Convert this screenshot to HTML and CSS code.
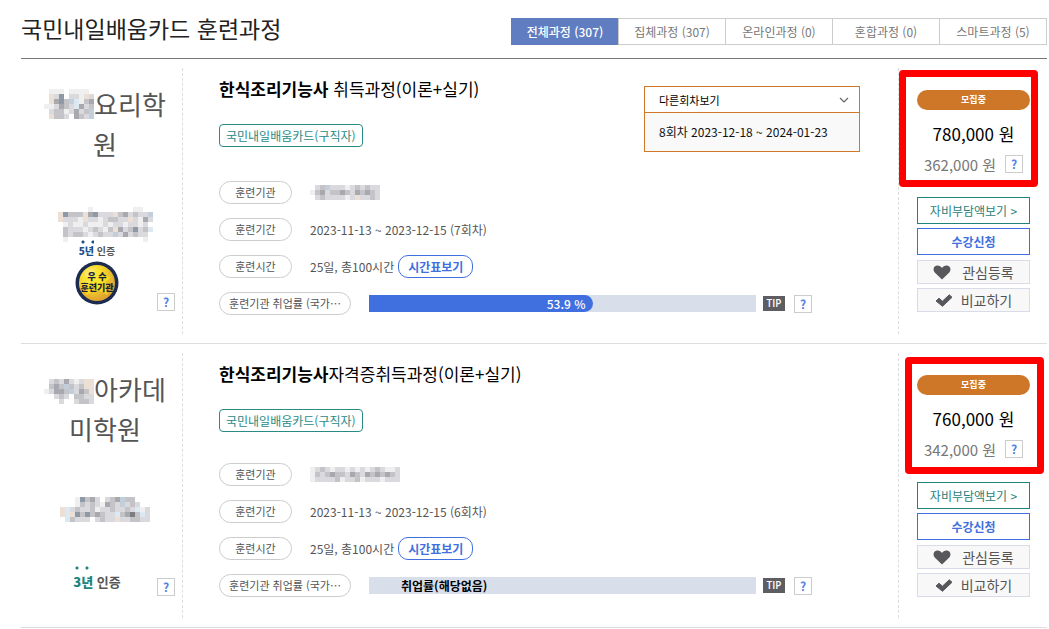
FILE: index.html
```html
<!DOCTYPE html>
<html lang="ko">
<head>
<meta charset="UTF-8">
<meta name="viewport" content="width=device-width, initial-scale=1.0">
<title>국민내일배움카드 훈련과정</title>
<link rel="stylesheet" href="styles.css">
</head>
<body>
<main class="page">
  <header class="page-header">
    <h1>국민내일배움카드 훈련과정</h1>
    <nav class="tabs">
      <a href="#" class="tab active">전체과정 (307)</a>
      <a href="#" class="tab">집체과정 (307)</a>
      <a href="#" class="tab">온라인과정 (0)</a>
      <a href="#" class="tab">혼합과정 (0)</a>
      <a href="#" class="tab">스마트과정 (5)</a>
    </nav>
  </header>

  <article class="course">
    <div class="school">
      <h2 class="school-name"><svg class="mosaic" data-rows=".aaa.aaaa.|.pbe.bbapb|.pdecslacd|aabdcbldbc|.bccabdbcs|.pccb.dcbs"></svg>요리학원</h2>
      <div class="school-logo"><svg class="mosaic" data-rows="......a........aa..|pecccpdebbbpcdbcbbs|pbbbapbbabccbbpbadb|.abaabaaababbabbab.|.cbbbabcbacpdbcebcl|.cbccbabcbbsbdbcbb.|.a...............a."></svg></div>
      <div class="school-foot">
        <div class="cert">
          <p class="cert-years small"><b>5년</b> 인증</p>
          <svg class="seal" viewBox="0 0 44 44" width="44" height="44">
            <defs>
              <radialGradient id="gold" cx="35%" cy="30%" r="75%">
                <stop offset="0" stop-color="#fff0a0"/>
                <stop offset="0.4" stop-color="#f8dc28"/>
                <stop offset="1" stop-color="#dd9b31"/>
              </radialGradient>
            </defs>
            <circle cx="22" cy="22" r="21.500" fill="#1c2c50"/>
            <circle cx="22" cy="22" r="18" fill="url(#gold)"/>
            <path d="M22 7l4 8 10 1-7 6 4 12-11-6-11 6 4-12-8-6 10-1z" fill="#fbe51e" opacity="0.7"/>
            <text x="22" y="19" class="seal-text">우 수</text>
            <text x="22" y="30" class="seal-text">훈련기관</text>
          </svg>
        </div>
        <button type="button" class="help">?</button>
      </div>
    </div>

    <div class="detail">
      <div class="detail-top">
        <div class="heading">
          <h3><strong>한식조리기능사</strong> 취득과정(이론+실기)</h3>
          <span class="tag">국민내일배움카드(구직자)</span>
        </div>
        <div class="rounds">
          <div class="rounds-box">
            <select aria-label="다른회차보기">
              <option>다른회차보기</option>
            </select>
            <svg class="chevron" viewBox="0 0 10 6" width="10" height="6"><path d="M1 1l4 4 4-4" fill="none" stroke="#666" stroke-width="1.2"/></svg>
          </div>
          <a href="#" class="round">8회차 2023-12-18 ~ 2024-01-23</a>
        </div>
      </div>
      <dl class="info">
        <div class="row">
          <dt>훈련기관</dt>
          <dd><svg class="mosaic" data-rows=".bcsbbbabcbcbb|acdbccdcbdcdcb|.bcbbbbabpbbcb"></svg></dd>
        </div>
        <div class="row">
          <dt>훈련기간</dt>
          <dd>2023-11-13 ~ 2023-12-15 (7회차)</dd>
        </div>
        <div class="row">
          <dt>훈련시간</dt>
          <dd>25일, 총100시간 <button type="button" class="timetable">시간표보기</button></dd>
        </div>
        <div class="row rate">
          <dt>훈련기관 취업률 (국가…</dt>
          <dd>
            <div class="bar"><div class="bar-fill" style="width: 58%">53.9 %</div></div>
            <span class="tip">TIP</span>
            <button type="button" class="help">?</button>
          </dd>
        </div>
      </dl>
    </div>

    <div class="actions">
      <span class="status">모집중</span>
      <p class="price">780,000 원</p>
      <p class="self-pay">362,000 원 <button type="button" class="help">?</button></p>
      <a href="#" class="btn btn-cost">자비부담액보기 &gt;</a>
      <a href="#" class="btn btn-apply">수강신청</a>
      <button type="button" class="btn btn-sub like">
        <svg viewBox="0 0 18 15" width="18" height="15"><path d="M9 14.500L1.700 7.500C-.5 5 .5 1 4 .6 6.200.4 8 1.400 9 3 10 1.400 11.800.4 14 .6c3.500.4 4.500 4.400 2.300 6.900z" fill="#58585c"/></svg>관심등록
      </button>
      <button type="button" class="btn btn-sub">
        <svg viewBox="0 0 18 13" width="18" height="13"><path d="M1 7l3-2.800 3.400 3L14.300.8 17 3.300 7.500 12.300z" fill="#58585c" stroke="#58585c" stroke-linejoin="round"/></svg>비교하기
      </button>
      <div class="mark mark-first"></div>
    </div>
  </article>

  <article class="course">
    <div class="school">
      <h2 class="school-name"><svg class="mosaic" data-rows="..........|.bcbdbabpps|.cdcscbcppl|abddcsbdcps|..bcb.ccbb|...b..bccb"></svg>아카데미학원</h2>
      <div class="school-logo"><svg class="mosaic" data-rows="..................|...aecdb.bcdscc...|...acbcbadcbsbcb..|plbcbbcabbcbbcblab|plpececdcbblcdkclb|.lcbbb.bcbbpbbccbb|.................."></svg></div>
      <div class="school-foot">
        <div class="cert">
          <p class="cert-years green"><b>3년</b> 인증</p>
        </div>
        <button type="button" class="help">?</button>
      </div>
    </div>

    <div class="detail">
      <div class="detail-top">
        <div class="heading">
          <h3><strong>한식조리기능사</strong>자격증취득과정(이론+실기)</h3>
          <span class="tag">국민내일배움카드(구직자)</span>
        </div>
      </div>
      <dl class="info">
        <div class="row">
          <dt>훈련기관</dt>
          <dd><svg class="mosaic" data-rows="abcbabbabababcbaab|acbcdccbdcbdcdcdcb|abbbbcabbcabbbabbb"></svg></dd>
        </div>
        <div class="row">
          <dt>훈련기간</dt>
          <dd>2023-11-13 ~ 2023-12-15 (6회차)</dd>
        </div>
        <div class="row">
          <dt>훈련시간</dt>
          <dd>25일, 총100시간 <button type="button" class="timetable">시간표보기</button></dd>
        </div>
        <div class="row rate">
          <dt>훈련기관 취업률 (국가…</dt>
          <dd>
            <div class="bar"><span class="bar-none">취업률(해당없음)</span></div>
            <span class="tip">TIP</span>
            <button type="button" class="help">?</button>
          </dd>
        </div>
      </dl>
    </div>

    <div class="actions">
      <span class="status">모집중</span>
      <p class="price">760,000 원</p>
      <p class="self-pay">342,000 원 <button type="button" class="help">?</button></p>
      <a href="#" class="btn btn-cost">자비부담액보기 &gt;</a>
      <a href="#" class="btn btn-apply">수강신청</a>
      <button type="button" class="btn btn-sub like">
        <svg viewBox="0 0 18 15" width="18" height="15"><path d="M9 14.500L1.700 7.500C-.5 5 .5 1 4 .6 6.200.4 8 1.400 9 3 10 1.400 11.800.4 14 .6c3.500.4 4.500 4.400 2.300 6.900z" fill="#58585c"/></svg>관심등록
      </button>
      <button type="button" class="btn btn-sub">
        <svg viewBox="0 0 18 13" width="18" height="13"><path d="M1 7l3-2.800 3.400 3L14.300.8 17 3.300 7.500 12.300z" fill="#58585c" stroke="#58585c" stroke-linejoin="round"/></svg>비교하기
      </button>
      <div class="mark mark-second"></div>
    </div>
  </article>
</main>
<script src="mosaic.js"></script>
</body>
</html>
```
FILE: styles.css
```css
* {
  box-sizing: border-box;
}

body {
  margin: 0;
  background: #fff;
  color: #555;
  font-family: "Noto Sans CJK KR", "Noto Sans", sans-serif;
  font-size: 12px;
}

h1, h2, h3, p, dl, dd {
  margin: 0;
  font-weight: normal;
}

a {
  text-decoration: none;
}

button, select {
  margin: 0;
  padding: 0;
  font-family: inherit;
  cursor: pointer;
}

.page {
  margin: 0 2px 0 21px;
}

/* header */
.page-header {
  display: flex;
  justify-content: space-between;
  padding: 18px 0 13px;
  border-bottom: 1px solid #777;
}

h1 {
  color: #222;
  font-size: 23px;
  line-height: 20px;
}

.tabs {
  display: flex;
}

.tab {
  width: 108px;
  height: 27px;
  margin-left: -1px;
  border: 1px solid #ccc;
  color: #777;
  line-height: 25px;
  text-align: center;
}

.tab.active {
  border-color: #5f7dc0;
  background: #5f7dc0;
  color: #fff;
  font-weight: 500;
}

/* one course */
.course {
  display: flex;
  padding: 9px 0;
  border-bottom: 1px solid #ddd;
}

.school {
  width: 162px;
  padding: 16px 7px 22px 6px;
  border-right: 1px dashed #ddd;
}

.school-name {
  padding: 0 8px 0 16px;
  font-size: 26px;
  line-height: 40px;
  text-align: center;
  word-break: break-all;
}

.school-name .mosaic {
  vertical-align: -4px;
}

.school-logo {
  height: 36px;
  margin-top: 43px;
  padding-left: 8px;
}

.school-logo .mosaic {
  display: block;
  margin: 0 auto;
}

.school-foot {
  display: flex;
  justify-content: flex-end;
  align-items: flex-end;
  gap: 33px;
  height: 68px;
}

.cert {
  display: flex;
  flex-direction: column;
  align-items: center;
  gap: 2px;
  width: 54px;
  padding-bottom: 6px;
}

.cert-years {
  font-size: 13px;
  font-weight: 700;
  line-height: 16px;
  white-space: nowrap;
}

.cert-years b {
  padding-top: 6px;
  background: radial-gradient(circle at 4px 2px, currentColor 1px, transparent 2px) 0 0 / 10px 5px repeat-x;
  color: #1f4e8c;
}

.cert-years.small {
  font-size: 10px;
}

.cert-years.small b {
  padding-top: 3px;
}

.cert-years.green b {
  color: #1c8580;
}

.seal {
  display: block;
}

.seal-text {
  fill: #1a2238;
  font-size: 9px;
  font-weight: 900;
  text-anchor: middle;
}

.help {
  flex: none;
  width: 18px;
  height: 18px;
  border: 1px solid #ccc;
  background: #fff;
  color: #5582e6;
  font-size: 12px;
  font-weight: 700;
  line-height: 16px;
}

/* middle column */
.detail {
  flex: 1;
  padding: 9px 38px 19px 36px;
}

.detail-top {
  display: flex;
  justify-content: space-between;
  margin-bottom: 29px;
}

.heading {
  min-height: 72px;
}

h3 {
  margin-bottom: 23px;
  color: #000;
  font-size: 17px;
  line-height: 24px;
}

h3 strong {
  font-weight: 700;
}

.tag {
  display: inline-block;
  height: 23px;
  padding: 0 6px;
  border: 1px solid #2a8a85;
  border-radius: 4px;
  color: #2a8a85;
  line-height: 21px;
}

.rounds {
  width: 216px;
  margin-top: 9px;
  border: 1px solid #cf7728;
}

.rounds-box {
  position: relative;
  border-bottom: 1px solid #cf7728;
}

.rounds select {
  display: block;
  width: 100%;
  height: 25px;
  padding: 0 14px;
  border: 0;
  background: #fff;
  color: #000;
  font-size: 11px;
  appearance: none;
}

.chevron {
  position: absolute;
  top: 10px;
  right: 10px;
}

.round {
  display: block;
  padding: 0 14px;
  background: #f9f9f9;
  color: #111;
  line-height: 38px;
}

.row {
  display: flex;
  gap: 18px;
  height: 23px;
  margin-bottom: 14px;
}

.row dt {
  width: 73px;
  border: 1px solid #ccc;
  border-radius: 12px;
  font-size: 11px;
  line-height: 21px;
  text-align: center;
  white-space: nowrap;
}

.row dd {
  display: flex;
  align-items: center;
}

.rate {
  margin: 0;
  padding-right: 48px;
}

.rate dt {
  width: 132px;
}

.rate dd {
  flex: 1;
}

.timetable {
  height: 23px;
  margin-left: 4px;
  padding: 0 9px;
  border: 1px solid #4070e0;
  border-radius: 10px;
  background: #fff;
  color: #4070e0;
  font-size: 12px;
  font-weight: 700;
}

.bar {
  flex: 1;
  height: 17px;
  background: #d8deea;
  line-height: 17px;
}

.bar-fill {
  padding-right: 8px;
  border-radius: 0 9px 9px 0;
  background: #4070e0;
  color: #fff;
  font-weight: 500;
  text-align: right;
}

.bar-none {
  padding-left: 32px;
  color: #000;
  font-weight: 700;
}

.tip {
  width: 22px;
  height: 15px;
  margin: 0 9px 0 7px;
  background: #5e5e62;
  color: #fff;
  font-family: "Open Sans", sans-serif;
  font-size: 10px;
  font-weight: 600;
  line-height: 15px;
  text-align: center;
}

/* right column */
.actions {
  position: relative;
  display: flex;
  flex-direction: column;
  width: 149px;
  padding: 22px 17px 0 18px;
  border-left: 1px dashed #ddd;
  text-align: center;
}

.status {
  height: 20px;
  border-radius: 10px;
  background: #cf7728;
  color: #fff;
  font-size: 9px;
  font-weight: 700;
  line-height: 19px;
}

.price {
  margin-top: 12px;
  color: #000;
  font-size: 17px;
  line-height: 24px;
}

.self-pay {
  display: flex;
  justify-content: center;
  align-items: center;
  gap: 9px;
  height: 26px;
  margin: 5px 0 20px;
  color: #777;
  font-size: 15px;
}

.btn {
  height: 27px;
  margin-bottom: 4px;
  border: 1px solid;
  background: #fff;
  font-size: 12px;
  line-height: 25px;
}

.btn-cost {
  border-color: #1f827c;
  color: #1f827c;
}

.btn-apply {
  margin-bottom: 5px;
  border-color: #4070e0;
  color: #4070e0;
  font-weight: 700;
}

.btn-sub {
  display: flex;
  justify-content: center;
  align-items: center;
  gap: 8px;
  height: 24px;
  border-color: #d8dce8;
  background: #f8f8f8;
  color: #555;
  font-size: 14px;
}

.like {
  gap: 11px;
}

/* red highlight over the price block */
.mark {
  position: absolute;
  width: 139px;
  height: 117px;
  border: 7px solid #f00;
  border-radius: 4px;
  pointer-events: none;
}

.mark-first {
  top: 2px;
  left: 0;
}

.mark-second {
  top: 4px;
  left: 6px;
}
```
FILE: mosaic.js
```js
// hides names behind coloured blocks, one letter per block
const colors = {
  a: '#f0eff0', b: '#dadade', c: '#c3c3c8', d: '#a8a9af', e: '#8f99a5',
  k: '#7b7d80', p: '#ecdfd6', l: '#dce9f2', s: '#c3cedb'
};
const size = 5;

document.querySelectorAll('.mosaic').forEach(svg => {
  const rows = svg.dataset.rows.split('|');
  svg.setAttribute('width', rows[0].length * size);
  svg.setAttribute('height', rows.length * size);
  rows.forEach((row, y) => {
    [...row].forEach((letter, x) => {
      if (!colors[letter]) return;
      const rect = document.createElementNS('http://www.w3.org/2000/svg', 'rect');
      rect.setAttribute('x', x * size);
      rect.setAttribute('y', y * size);
      rect.setAttribute('width', size);
      rect.setAttribute('height', size);
      rect.setAttribute('fill', colors[letter]);
      svg.appendChild(rect);
    });
  });
});
```
